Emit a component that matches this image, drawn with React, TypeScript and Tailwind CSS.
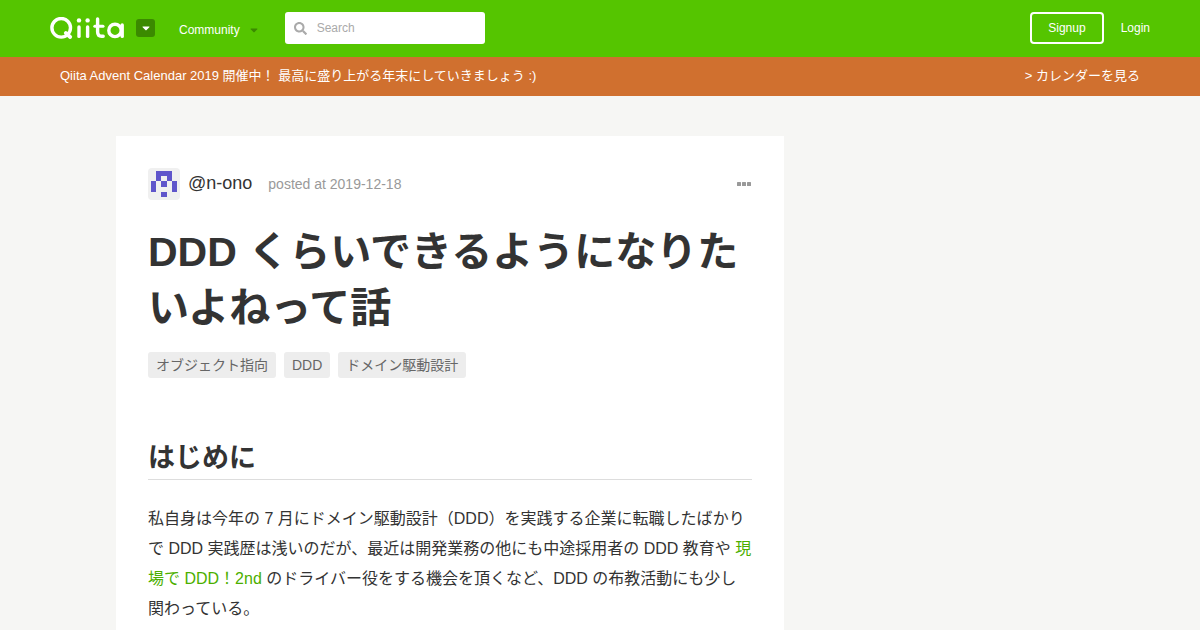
import React from 'react';
import { FaCaretDown, FaSearch } from 'react-icons/fa';

const TAGS = ['オブジェクト指向', 'DDD', 'ドメイン駆動設計'];

// Filled cells of the 5x5 identicon, as [column, row]
const AVATAR_CELLS = [
  [1, 0], [2, 0], [3, 0],
  [1, 1], [3, 1],
  [0, 2], [2, 2], [4, 2],
  [0, 3], [4, 3],
  [2, 4],
];

function QiitaLogo() {
  return (
    <svg width="75" height="23" viewBox="0 0 75 23" fill="none" stroke="#fff" strokeWidth="3.4" strokeLinecap="round" role="img" aria-label="Qiita">
      <circle cx="11.2" cy="10.8" r="9.3" />
      <path d="M15.8 16 L20.2 20" strokeWidth="3.8" />
      <circle cx="29" cy="3.4" r="2.2" fill="#fff" stroke="none" />
      <path d="M29 10 V19.4" />
      <circle cx="37.6" cy="3.4" r="2.2" fill="#fff" stroke="none" />
      <path d="M37.6 10 V19.4" />
      <path d="M47.6 2 V14.8 Q47.6 19.3 51.6 19.3 H53.2" />
      <path d="M44.8 9.2 H53" strokeWidth="3" />
      <circle cx="65" cy="13.4" r="6.2" />
      <path d="M72.2 8 V19.4" />
    </svg>
  );
}

function Avatar() {
  return (
    <svg width="32" height="32" viewBox="0 0 32 32" className="rounded-sm bg-[#f0f0f0]" shapeRendering="crispEdges" aria-hidden="true">
      {AVATAR_CELLS.map(([col, row]) => (
        <rect
          key={`${col}-${row}`}
          x={2.67 + col * 5.33}
          y={2.67 + row * 5.33}
          width="5.33"
          height="5.33"
          fill="#5f55cb"
        />
      ))}
    </svg>
  );
}

function Header() {
  return (
    <header className="bg-[#55c500] text-xs text-white">
      <div className="mx-auto flex h-[57px] max-w-[1100px] items-center justify-between pb-px">
        <div className="flex items-center">
          <a href="#">
            <QiitaLogo />
          </a>
          <button
            aria-label="Switch service"
            className="ml-[11px] flex h-[18px] w-[19px] items-center justify-center rounded-[3px] bg-[#3b8a00]"
          >
            <FaCaretDown size={12} />
          </button>
          <button className="ml-6 flex items-center gap-2 pt-1">
            Community
            <FaCaretDown size={12} className="text-[#3b8a00]" />
          </button>
          <form role="search" className="ml-[25px] flex h-8 w-[200px] items-center gap-[10px] rounded-[3px] bg-white px-[9px]">
            <FaSearch size={13} className="shrink-0 text-[#aaa]" />
            <input
              type="text"
              aria-label="Search"
              placeholder="Search"
              className="w-full min-w-0 text-xs text-[#333] outline-none placeholder:text-[#aaa]"
            />
          </form>
        </div>
        <div className="flex items-center gap-[17px]">
          <a href="#" className="flex h-8 items-center rounded border-2 border-white px-4">Signup</a>
          <a href="#">Login</a>
        </div>
      </div>
    </header>
  );
}

function Banner() {
  return (
    <div className="bg-[#d0702f] pb-px text-[13px] leading-[38px] text-white">
      <div className="mx-auto flex max-w-[1080px] justify-between">
        <a href="#">Qiita Advent Calendar 2019 開催中！ 最高に盛り上がる年末にしていきましょう :)</a>
        <a href="#">&gt; カレンダーを見る</a>
      </div>
    </div>
  );
}

function Article() {
  return (
    <article className="w-[668px] bg-white p-8">
      <div className="flex items-center">
        <Avatar />
        <a href="#" className="ml-2 pb-0.5 text-lg leading-7">@n-ono</a>
        <span className="ml-4 text-sm text-[#999]">posted at 2019-12-18</span>
        <button aria-label="More" className="ml-auto text-[#999]">
          <svg width="15" height="4" viewBox="0 0 15 4" fill="currentColor">
            <rect width="4" height="4" rx="0.5" />
            <rect x="5" width="4" height="4" rx="0.5" />
            <rect x="10" width="4" height="4" rx="0.5" />
          </svg>
        </button>
      </div>

      <h1 className="mt-6 text-[41px] leading-14 font-bold">DDD くらいできるようになりたいよねって話</h1>

      <ul className="mt-4 flex gap-2 text-sm text-[#666]">
        {TAGS.map((tag) => (
          <li key={tag}>
            <a href="#" className="block rounded-[3px] bg-[#ededed] px-2 leading-[26px]">{tag}</a>
          </li>
        ))}
      </ul>

      <section className="mt-15">
        <h2 className="border-b border-[#ddd] text-[27px] leading-[41px] font-bold">はじめに</h2>
        <p className="mt-6 text-base leading-[30px]">
          私自身は今年の 7 月にドメイン駆動設計（DDD）を実践する企業に転職したばかりで DDD 実践歴は浅いのだが、最近は開発業務の他にも中途採用者の DDD 教育や{' '}
          <a href="#" className="text-[#4caf00]">現場で DDD！2nd</a>{' '}
          のドライバー役をする機会を頂くなど、DDD の布教活動にも少し関わっている。
        </p>
      </section>
    </article>
  );
}

export default function App() {
  return (
    <div lang="ja" className="min-h-screen bg-[#f6f6f4] font-['Liberation_Sans','Noto_Sans_CJK_JP',sans-serif] text-[#333]">
      <Header />
      <Banner />
      <main className="mx-auto max-w-[968px] pt-10">
        <Article />
      </main>
    </div>
  );
}
